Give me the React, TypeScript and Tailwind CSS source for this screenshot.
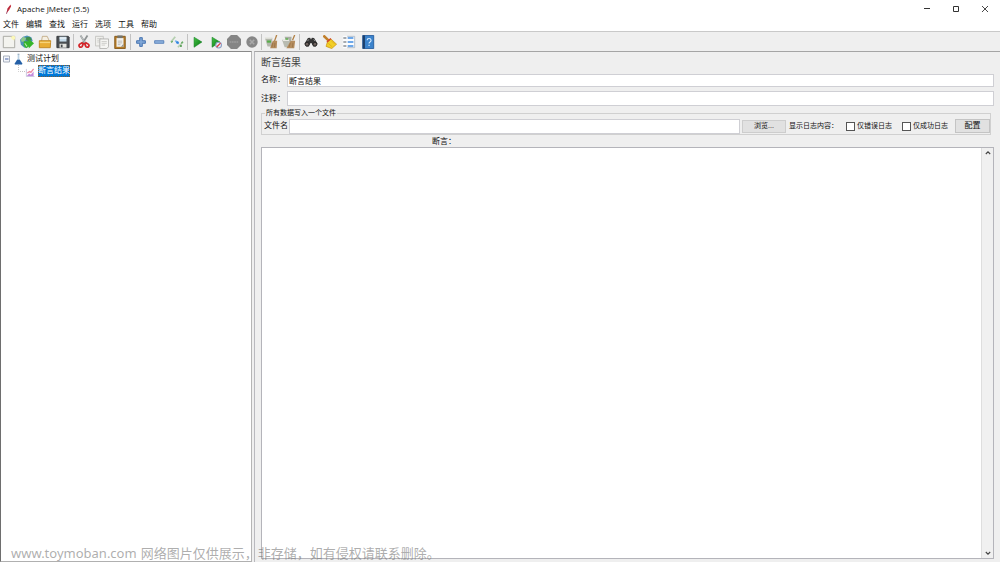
import { useState } from "react";
import type { ReactNode } from "react";

type Tool = { name: string; icon: ReactNode };

const PlayShape = () => (
  <path d="M3.5 2.500 12.500 8l-9 6z" fill="url(#green)" stroke="#0b7a1c" strokeWidth="0.6" />
);

const fileTools: Tool[] = [
  {
    name: "新建",
    icon: (
      <>
        <path d="M1.500 1.500h13v13h-13z" fill="#f3f3ef" stroke="#a3a39d" />
        <path d="M9.500 2h4.500v4.500z" fill="#f6f1a6" />
        <circle cx="13" cy="3" r="2.200" fill="#fbf7b8" />
      </>
    ),
  },
  {
    name: "模板",
    icon: (
      <>
        <path d="M0 5.500 3.500 2 8 .5l5 2 1.500 4L9 14l-4 .5-4-3.500z" fill="#4f92b5" />
        <path d="M1 5 4 2l3 2-2 3-3 1z" fill="#8fc98a" />
        <path d="M7 2.500 11 2l2.500 3-3.500 2-3-1z" fill="#3f8f4a" />
        <path d="M4.500 7H10V4.500l6 5-6 6V13L7 15l-3-3z" fill="#35b52b" />
        <path d="M5.500 9.500 8 13" stroke="#b8ecaf" strokeWidth="1.200" />
      </>
    ),
  },
  {
    name: "打开",
    icon: (
      <>
        <path d="M4 7l1-5.500h5.500L13 7" fill="#f5efe2" stroke="#b49a6c" strokeWidth="0.800" />
        <path d="M1.500 6.500h13l-.5 8H1.500z" fill="#e8ad34" stroke="#bf841f" />
        <path d="M2 8.500h12" stroke="#f6d37a" strokeWidth="1.500" />
      </>
    ),
  },
  {
    name: "保存",
    icon: (
      <>
        <path d="M1 1.500h13l1 1v12H1z" fill="#4a4e52" stroke="#33363a" />
        <path d="M4 2h8v5.500H4z" fill="#c7dcea" />
        <path d="M4 3.500h8" stroke="#fff" />
        <path d="M4 10h8v4.500H4z" fill="#e4e4df" />
        <path d="M5.500 11h2v3h-2z" fill="#44484c" />
      </>
    ),
  },
];

const editTools: Tool[] = [
  {
    name: "剪切",
    icon: (
      <>
        <path d="M4 .5 10 10M12 .5 6 10" stroke="#8e9394" strokeWidth="2" />
        <path d="M4 .5 9 8.500" stroke="#d9dddd" strokeWidth="0.800" />
        <path d="M6.500 8.500 4 10a2 2 0 1 0 2 3l1.500-4M9.500 8.500 12 10a2 2 0 1 1-2 3L8.500 9" fill="none" stroke="#d32328" strokeWidth="2" />
      </>
    ),
  },
  {
    name: "复制",
    icon: (
      <>
        <path d="M.5 1.500h9v11h-9z" fill="#efefec" stroke="#c2c2bf" />
        <path d="M2.500 4h5M2.500 6h3M2.500 8h3" stroke="#d0d0cd" />
        <path d="M5.500 4.500h10v9l-2 2h-8z" fill="#f5f5f3" stroke="#b0b0ae" />
        <path d="M7.500 7.500h6M7.500 9.500h6M7.500 11.500h4" stroke="#c9c9c6" />
      </>
    ),
  },
  {
    name: "粘贴",
    icon: (
      <>
        <path d="M2 1.500h12v14H2z" fill="#b57b27" stroke="#7f5415" />
        <path d="M4 3.500h8v10H4z" fill="#f1f1ee" />
        <path d="M5.500 7h5M5.500 9h5M5.500 11h3" stroke="#b5b5b1" />
        <path d="M5 .5h6v3H5z" fill="#74756f" />
        <path d="M9 13.500 12 10v3.500z" fill="#8f8f87" />
      </>
    ),
  },
];

const treeTools: Tool[] = [
  {
    name: "展开",
    icon: (
      <path d="M6.500 3h3v3.500H13v3H9.500V13h-3V9.500H3v-3h3.500z" fill="#7fa6d6" stroke="#2c5fa6" strokeWidth="0.900" />
    ),
  },
  {
    name: "折叠",
    icon: <path d="M3 6.500h10.500v3H3z" fill="#8db1dc" stroke="#4a76b4" strokeWidth="0.900" />,
  },
  {
    name: "切换",
    icon: (
      <>
        <path d="M1 8 6 2M9 14l6-6" stroke="#b4cfaf" strokeWidth="2" />
        <path d="M1.500 8.500 3 7M13 9.500l1.500-2" stroke="#5da65b" strokeWidth="1.500" />
        <path d="M6 6.500 10 10" stroke="#79b7ee" strokeWidth="2" />
        <circle cx="8.500" cy="8.500" r="1.500" fill="#3484dd" />
        <circle cx="12.500" cy="12.500" r="1.200" fill="#4f9a4d" />
      </>
    ),
  },
];

const runTools: Tool[] = [
  { name: "启动", icon: <PlayShape /> },
  {
    name: "不停顿开始",
    icon: (
      <>
        <PlayShape />
        <circle cx="11" cy="11.500" r="3.300" fill="#e9edf6" stroke="#8c9ec4" strokeWidth="1.200" />
        <path d="M8.800 13.700l4.400-4.400" stroke="#dc3d42" strokeWidth="1.500" />
      </>
    ),
  },
  {
    name: "停止",
    icon: (
      <>
        <path d="M4.500 0h7L16 4.500v7L11.500 16h-7L0 11.500v-7z" fill="#858585" />
        <path d="M3 8h10" stroke="#979797" strokeWidth="2.500" strokeDasharray="2 .6" />
      </>
    ),
  },
  {
    name: "关闭",
    icon: (
      <>
        <circle cx="8" cy="8" r="6.500" fill="#878787" />
        <path d="M5.500 5.500l5 5M10.500 5.500l-5 5" stroke="#a9a9a9" strokeWidth="1.800" />
      </>
    ),
  },
];

const clearTools: Tool[] = [
  {
    name: "清除",
    icon: (
      <>
        <path d="M1 3h8.500L9 13H4z" fill="#b3b7ac" />
        <path d="M1 3.500h8" stroke="#ecece6" strokeWidth="1.500" />
        <path d="M3.500 7.500h4.500" stroke="#55ad48" strokeWidth="2.500" />
        <path d="M14.500 0 12 7" stroke="#b38247" strokeWidth="1.500" />
        <path d="M10 6.500h5L14.500 15H7z" fill="#b58d5e" />
        <path d="M10 9l-1 5M12.500 9l-.5 5" stroke="#8d683f" strokeWidth="0.700" />
      </>
    ),
  },
  {
    name: "清除全部",
    icon: (
      <>
        <path d="M3 2h8l-1 8H5z" fill="#aaaea5" />
        <path d="M0 5.500h9L8 14H3z" fill="#b8bbb1" />
        <path d="M1 6h7" stroke="#eeeee8" strokeWidth="1.500" />
        <path d="M4 4.500h3" stroke="#6cb45e" strokeWidth="2" />
        <path d="M14.500 0 12 6" stroke="#b38247" strokeWidth="1.500" />
        <path d="M10 6.500h5L14 15H5z" fill="#b58d5e" />
        <path d="M9.500 9 8 14M12.500 9l-.5 5" stroke="#8d683f" strokeWidth="0.700" />
      </>
    ),
  },
];

const searchTools: Tool[] = [
  {
    name: "查找",
    icon: (
      <>
        <path d="M4.500 3.500 7 3l1 2 1-2 2.500.5 4 6.500-2 3h-3L8.500 9h-1L5.500 13h-3l-2-3z" fill="#343434" />
        <circle cx="3.500" cy="10.500" r="2.200" fill="#6d625d" stroke="#222" />
        <circle cx="12.500" cy="10.500" r="2.200" fill="#6d625d" stroke="#222" />
        <path d="M5.500 5 4 7M11 5l1.500 2" stroke="#999" />
      </>
    ),
  },
  {
    name: "重置查找",
    icon: (
      <>
        <path d="M1.500 1.500l5 5" stroke="#c17f2b" strokeWidth="3" strokeLinecap="round" />
        <path d="M5 8 9 4.500l6.500 6L10 15.500 3.500 13z" fill="#f2cf27" stroke="#c58f0c" strokeWidth="0.800" />
        <path d="M6 9.500l4.500 4M9.500 6.500l4 4" stroke="#d6a313" strokeWidth="0.700" />
        <path d="M4.500 8 9 4" stroke="#d4472c" strokeWidth="1.800" />
      </>
    ),
  },
  {
    name: "函数助手",
    icon: (
      <>
        <path d="M1 1h14v14H1z" fill="#fafcfe" />
        <path d="M6.500 3.500H13M6.500 8H13M6.500 12.500H13" stroke="#408ce2" strokeWidth="1.800" />
        <path d="M1.500 3.500H5M1.500 8H5M1.500 12.500H5" stroke="#8a8f95" strokeWidth="1.600" />
        <path d="M6 1.500h8.500v13H6" stroke="#a9b6c2" />
      </>
    ),
  },
  {
    name: "帮助",
    icon: (
      <>
        <path d="M2 .5h12.500v15H2z" fill="#3b83cc" stroke="#235a9b" />
        <path d="M2 .5h2.500v15H2z" fill="#1c3f6b" />
        <path d="M7 6q0-2 2.200-2T11.500 6q0 1.200-1.200 1.900T9.200 9.800M9.200 11.200v1.500" fill="none" stroke="#d9edff" strokeWidth="1.300" />
      </>
    ),
  },
];

const menus = ["文件", "编辑", "查找", "运行", "选项", "工具", "帮助"];

function ToolGroup({ tools, wide }: { tools: Tool[]; wide?: boolean }) {
  return (
    <>
      {tools.map((tool) => (
        <button
          key={tool.name}
          title={tool.name}
          aria-label={tool.name}
          className={wide ? "flex w-[19px] shrink-0 justify-center" : "flex w-[18px] shrink-0 justify-center"}
        >
          <svg viewBox="0 0 16 16" className="h-[14px] w-[14px]" fill="none">
            {tool.icon}
          </svg>
        </button>
      ))}
    </>
  );
}

function Separator({ thin }: { thin?: boolean }) {
  return (
    <div className={thin ? "flex w-px shrink-0 justify-center" : "flex w-[3px] shrink-0 justify-center"}>
      <div className="h-4 w-px bg-[#c2c2c2]" />
    </div>
  );
}

function TitleBar() {
  return (
    <header className="flex h-[18px] shrink-0 items-center bg-white pr-px pl-1">
      <svg viewBox="0 0 10 12" className="h-[10px] w-[9px]">
        <path d="M2.500 11 4 5 7.500.5 8 3 6 7z" fill="#d8343a" />
        <path d="M2.500 12 4.500 6 7.500 2" stroke="#7d234c" strokeWidth="0.700" fill="none" />
      </svg>
      <h1 className="ml-1 font-['Open_Sans',sans-serif] text-[8px] leading-[10px]">Apache JMeter (5.5)</h1>
      <div className="ml-auto flex">
        <button aria-label="最小化" className="flex w-[29px] justify-center">
          <svg viewBox="0 0 8 8" className="h-2 w-2">
            <path d="M1 3.500h6" stroke="#333" />
          </svg>
        </button>
        <button aria-label="最大化" className="flex w-[29px] justify-center">
          <svg viewBox="0 0 8 8" className="h-2 w-2">
            <path d="M1.500 1.500h5v5h-5z" stroke="#333" fill="none" />
          </svg>
        </button>
        <button aria-label="关闭窗口" className="flex w-[29px] justify-center">
          <svg viewBox="0 0 8 8" className="h-2 w-2">
            <path d="M1 1l6 6M7 1 1 7" stroke="#333" strokeWidth="0.900" />
          </svg>
        </button>
      </div>
    </header>
  );
}

function TestTree() {
  return (
    <aside className="w-[252px] shrink-0 border-t border-r border-b border-l border-t-[#8a8a8a] border-r-[#b5b5b5] border-b-[#b0b0b0] border-l-[#6e6e6e] bg-white pt-px">
      <ul role="tree">
        <li role="treeitem" aria-expanded="true">
          <div className="flex h-3 items-center pl-[2px]">
            <svg viewBox="0 0 8 8" className="h-2 w-2">
              <path d="M.5 1h6v6h-6z" fill="#f4f6fb" stroke="#a8b0bd" />
              <path d="M2 4h3.500" stroke="#4663a8" />
            </svg>
            <svg viewBox="0 0 12 14" className="ml-[2px] h-[12px] w-[11px]">
              <path d="M5 1h2v6l3.500 5v1h-9v-1L5 7z" fill="#bcd2e4" />
              <path d="M4.500 8h3l3 4.500-.5 1H2l-.5-1z" fill="#245fa6" />
              <path d="M5 1.500h2" stroke="#93a4b3" />
            </svg>
            <span className="ml-[3px] text-[8px] leading-[10px]">测试计划</span>
          </div>
          <ul role="group">
            <li role="treeitem" aria-selected="true" className="flex h-3 items-center pl-4">
              <svg viewBox="0 0 8 12" className="h-3 w-2">
                <path d="M1.500 0v6.500H8" stroke="#c4c4c4" strokeDasharray="1 1" fill="none" />
              </svg>
              <svg viewBox="0 0 10 10" className="mt-[2px] h-[9px] w-[10px]">
                <path d="M1 1v8.500h9" stroke="#c7c2dd" fill="none" />
                <path d="M1.500 9 4 6l2 1.500L9 4v5z" fill="#c58bdc" />
                <path d="M2 5.500 4.500 4 6 5l3-4" stroke="#ee8ba4" strokeWidth="1.400" fill="none" />
              </svg>
              <span className="ml-[3px] h-3 bg-[#0078d7] text-[8px] leading-3 text-white outline outline-dotted -outline-offset-1 outline-[#7a5a38]">
                断言结果
              </span>
            </li>
          </ul>
        </li>
      </ul>
    </aside>
  );
}

function WriteToFile() {
  const [errorsOnly, setErrorsOnly] = useState(false);
  const [successOnly, setSuccessOnly] = useState(false);
  const checkbox = "h-[9px] w-[9px] shrink-0 appearance-none border border-[#555] bg-white checked:bg-[#0078d7]";

  return (
    <fieldset className="mt-[3px] mr-[3px] border border-[#d0d0d0] pt-px pl-[2px]">
      <legend className="ml-px px-px text-[7px] leading-2">所有数据写入一个文件</legend>
      <div className="flex h-4 items-center text-[7px] leading-[10px]">
        <label htmlFor="filename" className="w-[25px] shrink-0 text-[8px]">
          文件名
        </label>
        <input id="filename" className="h-[15px] min-w-0 flex-1 border border-[#cfcfd4] bg-white px-px text-[8px]" />
        <button className="ml-[2px] h-[13px] w-[44px] shrink-0 border border-[#cdcdcd] bg-[#e1e1e1] leading-[10px]">
          浏览...
        </button>
        <span className="ml-[3px] w-[57px] shrink-0">显示日志内容：</span>
        <label className="flex w-14 shrink-0 items-center gap-[2px]">
          <input type="checkbox" className={checkbox} checked={errorsOnly} onChange={(e) => setErrorsOnly(e.target.checked)} />
          仅错误日志
        </label>
        <label className="flex w-[53px] shrink-0 items-center gap-[2px]">
          <input type="checkbox" className={checkbox} checked={successOnly} onChange={(e) => setSuccessOnly(e.target.checked)} />
          仅成功日志
        </label>
        <button className="h-[14px] w-[35px] shrink-0 border border-[#c4c4c4] bg-[#e1e1e1] text-[8px] leading-[10px]">配置</button>
      </div>
    </fieldset>
  );
}

function AssertionPanel() {
  const [name, setName] = useState("断言结果");

  return (
    <main className="flex min-w-0 flex-1 flex-col border-t border-l border-t-[#a5a5a5] border-l-[#b9b9be] bg-[#efefef] pt-1 pr-[6px] pb-[3px] pl-[6px]">
      <h2 className="text-[10px] leading-[14px] text-[#444]">断言结果</h2>
      <div className="mt-[3px] flex h-[14px] items-center">
        <label htmlFor="name" className="w-[26px] shrink-0 text-[8px] leading-[10px] whitespace-nowrap">
          名称：
        </label>
        <input
          id="name"
          value={name}
          onChange={(e) => setName(e.target.value)}
          className="h-[13px] min-w-0 flex-1 border border-[#cfcfd4] bg-white px-px text-[8px] leading-[10px]"
        />
      </div>
      <div className="mt-1 flex h-[15px] items-center">
        <label htmlFor="comment" className="w-[26px] shrink-0 text-[8px] leading-[10px] whitespace-nowrap">
          注释：
        </label>
        <input id="comment" className="h-[15px] min-w-0 flex-1 border border-[#cfcfd4] bg-white px-px text-[8px] leading-[10px]" />
      </div>
      <WriteToFile />
      <label htmlFor="assertions" className="ml-[171px] pt-[2px] text-[8px] leading-[10px]">
        断言：
      </label>
      <div className="flex flex-1 border border-[#b4b4ba] bg-white">
        <textarea id="assertions" readOnly className="min-w-0 flex-1 resize-none p-px text-[8px] outline-none" />
        <div className="flex w-3 shrink-0 flex-col justify-between border-l border-[#dedede] bg-[#f0f0f0]">
          <button aria-label="向上滚动" className="flex h-[10px] items-center justify-center">
            <svg viewBox="0 0 6 6" className="h-[6px] w-[6px]">
              <path d="M.8 4 3 1.800 5.200 4" stroke="#444" strokeWidth="1.100" fill="none" />
            </svg>
          </button>
          <button aria-label="向下滚动" className="flex h-[10px] items-center justify-center">
            <svg viewBox="0 0 6 6" className="h-[6px] w-[6px]">
              <path d="M.8 2 3 4.200 5.200 2" stroke="#444" strokeWidth="1.100" fill="none" />
            </svg>
          </button>
        </div>
      </div>
    </main>
  );
}

export default function App() {
  return (
    <div className="relative flex h-screen flex-col overflow-hidden bg-[#efefef] font-['Liberation_Sans','Noto_Sans_CJK_SC',sans-serif] text-[#111]">
      <svg className="absolute h-0 w-0" aria-hidden="true">
        <defs>
          <linearGradient id="green" x1="0" y1="0" x2="1" y2="1">
            <stop offset="0" stopColor="#46c247" />
            <stop offset="1" stopColor="#05750f" />
          </linearGradient>
        </defs>
      </svg>

      <TitleBar />

      <nav className="flex h-[13px] shrink-0 items-center gap-[7px] bg-white pl-[3px]">
        {menus.map((menu) => (
          <button key={menu} className="text-[8px] leading-[10px]">
            {menu}
          </button>
        ))}
      </nav>

      <div role="toolbar" className="flex h-5 shrink-0 items-center border-t border-[#c9c9c9]">
        <ToolGroup tools={fileTools} />
        <Separator />
        <ToolGroup tools={editTools} />
        <Separator />
        <ToolGroup tools={treeTools} />
        <Separator />
        <ToolGroup tools={runTools} />
        <Separator thin />
        <ToolGroup tools={clearTools} />
        <Separator />
        <ToolGroup tools={searchTools} wide />
      </div>

      <div className="flex min-h-0 flex-1 gap-[2px]">
        <TestTree />
        <AssertionPanel />
      </div>

      {/* watermark across the bottom of both panes */}
      <p className="pointer-events-none absolute bottom-0 left-[11px] flex items-center gap-1 text-[13px] leading-[17px] whitespace-nowrap text-[#777]/60">
        <span className="font-['Noto_Sans',sans-serif]">www.toymoban.com</span>
        <span>网络图片仅供展示，非存储，如有侵权请联系删除。</span>
      </p>
    </div>
  );
}
